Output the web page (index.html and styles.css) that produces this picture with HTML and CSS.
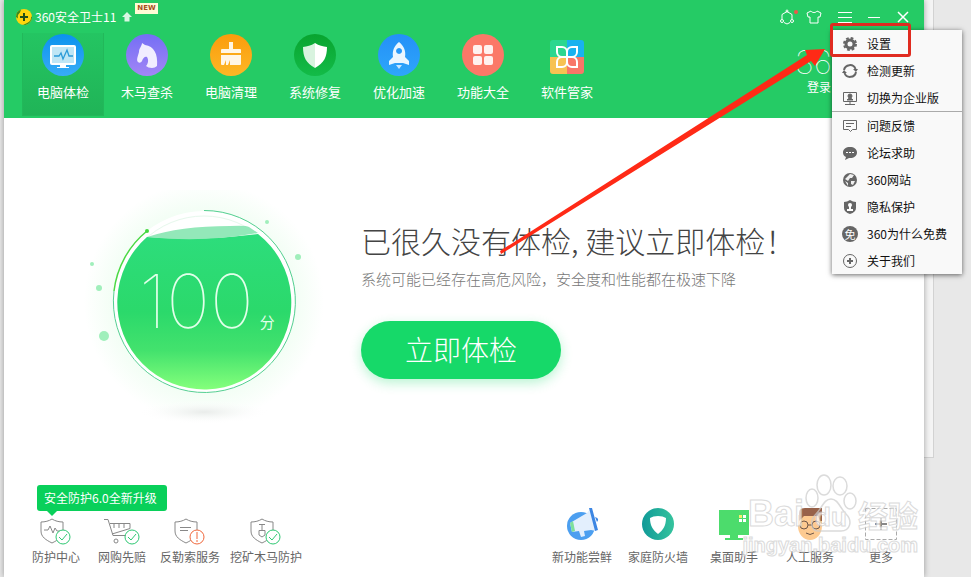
FILE: index.html
```html
<!DOCTYPE html>
<html lang="zh-CN">

<head>
  <meta charset="UTF-8" />
  <meta name="viewport" content="width=device-width, initial-scale=1.0" />
  <title>360安全卫士11</title>
  <link rel="stylesheet" href="styles.css">
</head>

<body>

  <div class="back-panel"></div>

  <div class="window">
    <header class="header">
      <div class="titlebar">
        <svg class="logo" viewBox="0 0 16 16" width="16" height="16">
          <circle cx="8" cy="8" r="8" fill="#fdd60d" />
          <path d="M0 8a8 8 0 0 1 5-7.400l-1 3a6 6 0 0 0-2 6zM16 8a8 8 0 0 1-9 8l5-2.500a6 6 0 0 0 3-6z" fill="#3c8a1c" />
          <path d="M7 4h2v3h3v2H9v3H7V9H4V7h3z" fill="#22501a" />
        </svg>
        <span class="app-name">360安全卫士11</span>
        <svg class="up" viewBox="0 0 10 10" width="10" height="10"><path d="M5 0l5 5H7.500v4.500H2.500V5H0z" fill="#d9f7e3" /></svg>
        <span class="new">NEW</span>
        <div class="controls">
          <button aria-label="消息"><svg viewBox="0 0 18 16" width="18" height="16" fill="none" stroke="#fff">
            <path d="M2 10V5.500L7 2.500l5 3V10M4 13.500l3 1.500 3-1.500" /><circle cx="7" cy="2" r="1" /><circle cx="2" cy="12" r="1.500" /><circle cx="12" cy="12" r="1.500" /><circle cx="16" cy="3" r="2" fill="#f0564a" stroke="none" /></svg></button>
          <button aria-label="换肤"><svg viewBox="0 0 16 14" width="16" height="14" fill="none" stroke="#fff">
            <path d="M5 1c1 2 5 2 6 0l4 2-1 4h-2v6H4V7H2L1 3z" /></svg></button>
          <button aria-label="菜单"><svg viewBox="0 0 14 12" width="14" height="12" stroke="#fff"><path d="M0 1.500h14M0 6.500h14M0 11.500h14" /></svg></button>
          <button aria-label="最小化"><svg viewBox="0 0 12 12" width="12" height="12" stroke="#fff"><path d="M0 6.500h12" /></svg></button>
          <button aria-label="关闭"><svg viewBox="0 0 12 12" width="12" height="12" stroke="#fff" stroke-width="1.500"><path d="M1 1l10 10M11 1L1 11" /></svg></button>
        </div>
      </div>

      <div class="toolbar">
        <nav class="tabs">
          <a class="tab active" href="#">
            <svg viewBox="0 0 42 42" width="42" height="42">
              <circle cx="21" cy="21" r="21" fill="url(#blue)" />
              <rect x="8" y="11" width="26" height="20" rx="2" fill="#fff" />
              <rect x="10" y="13" width="22" height="16" fill="#bfe6f5" />
              <path d="M18 31h6v2h3v1H15v-1h3z" fill="#fff" />
              <path d="M12 22h5l2-3 2 6 4-9 2 6h4" fill="none" stroke="#2b9bd8" stroke-width="1.300" />
            </svg>
            电脑体检
          </a>
          <a class="tab" href="#">
            <svg viewBox="0 0 42 42" width="42" height="42">
              <circle cx="21" cy="21" r="21" fill="url(#purple)" />
              <path d="M16 9l3 2c9 1 13 9 12 21q-2 2-5 2-4 0-6-2c2-2 3-6 1-9-2-1-4 1-5 4-1 2-3 2-4 1-2-2 0-6 1-10 0-4 3-6 3-9z" fill="#f1edff" />
            </svg>
            木马查杀
          </a>
          <a class="tab" href="#">
            <svg viewBox="0 0 42 42" width="42" height="42">
              <circle cx="21" cy="21" r="21" fill="url(#orange)" />
              <path d="M19 8h4v7h7q1 0 1 1v3H11v-3q0-1 1-1h7zM11 21h20v9q0 1-1 1H20v-5l-2 5h-2v-5l-2 5h-2q-1 0-1-1z" fill="#fff6e6" />
            </svg>
            电脑清理
          </a>
          <a class="tab" href="#">
            <svg viewBox="0 0 42 42" width="42" height="42">
              <circle cx="21" cy="21" r="21" fill="url(#green)" />
              <path d="M21 9c-4 3-8 3-12 4 0 10 3 16 12 21z" fill="#d8f3df" />
              <path d="M21 9c4 3 8 3 12 4 0 10-3 16-12 21z" fill="#fff" />
            </svg>
            系统修复
          </a>
          <a class="tab" href="#">
            <svg viewBox="0 0 42 42" width="42" height="42">
              <circle cx="21" cy="21" r="21" fill="url(#azure)" />
              <path fill-rule="evenodd" d="M21 8c5 4 7 9 6 15l4 4v4l-6-2h-8l-6 2v-4l4-4c-1-6 1-11 6-15zm0 6a3 3 0 1 0 .1 0z" fill="#eaf6ff" />
              <path d="M18 31h6l-3 4z" fill="#c9e8ff" />
            </svg>
            优化加速
          </a>
          <a class="tab" href="#">
            <svg viewBox="0 0 42 42" width="42" height="42">
              <circle cx="21" cy="21" r="21" fill="#fb7868" />
              <g fill="#fff0ee"><rect x="11" y="11" width="9" height="9" rx="2" /><rect x="22" y="11" width="9" height="9" rx="2" /><rect x="11" y="22" width="9" height="9" rx="2" /><rect x="22" y="22" width="9" height="9" rx="2" /></g>
            </svg>
            功能大全
          </a>
          <a class="tab" href="#">
            <svg viewBox="0 0 42 42" width="42" height="42">
              <path d="M21 6H7q-3 0-3 3v14h17z" fill="#2cd78f" />
              <path d="M21 6h14q3 0 3 3v14H21z" fill="#19b2ef" />
              <path d="M4 23h17v17H7q-3 0-3-3z" fill="#f7c252" />
              <path d="M21 23h17v14q0 3-3 3H21z" fill="#f87668" />
              <path d="M11 13h5a5 5 0 0 1 5 5v5h-5a5 5 0 0 1-5-5zM31 13h-5a5 5 0 0 0-5 5v5h5a5 5 0 0 0 5-5zM11 33h5a5 5 0 0 0 5-5v-5h-5a5 5 0 0 0-5 5zM31 33h-5a5 5 0 0 1-5-5v-5h5a5 5 0 0 1 5 5z" fill="none" stroke="#fff" stroke-width="2" />
            </svg>
            软件管家
          </a>
        </nav>
        <div class="account">
          <span class="account-logo">360</span>
          <a href="#">登录</a>
        </div>
      </div>
    </header>

    <main class="main">
      <div class="score">
        <svg viewBox="0 0 260 240" width="260" height="240">
          <circle cx="134" cy="112" r="120" fill="url(#halo)" />
          <ellipse cx="134" cy="222" rx="66" ry="12" fill="url(#shade)" />
          <circle cx="134" cy="112" r="91" fill="#fff" />
          <circle cx="134" cy="112" r="86" fill="#fff" stroke="#e6f8ec" />
          <path d="M77 47Q134 51 188 44A87 87 0 1 1 77 47z" fill="url(#liquid)" />
          <path d="M77 47Q110 36 160 36Q176 35 179 37L188 43Q134 53 77 47z" fill="#93e8b9" />
          <path d="M134 20.500A91 91 0 1 1 44 101" fill="none" stroke="#54cf91" />
          <path d="M44 101A91 91 0 0 1 77 41" fill="none" stroke="#4bd944" stroke-width="1.500" />
          <circle cx="77" cy="41" r="2" fill="#43d73f" />
          <g fill="#a0efbb"><circle cx="197" cy="32" r="2" /><circle cx="228" cy="67" r="3" /><circle cx="22" cy="74" r="2" /><circle cx="29" cy="98" r="3" /><circle cx="34" cy="146" r="5" /></g>
        </svg>
        <div class="score-text"><span class="number">100</span><span class="unit">分</span></div>
      </div>
      <div class="advice">
        <h1>已很久没有体检, 建议立即体检！</h1>
        <p>系统可能已经存在高危风险，安全度和性能都在极速下降</p>
        <button class="check">立即体检</button>
      </div>
    </main>

    <footer class="footer">
      <div class="tip">安全防护6.0全新升级</div>
      <div class="guards">
        <a class="item" href="#">
          <svg viewBox="0 0 32 28" width="32" height="28" fill="none" stroke="#888">
            <path d="M12 1c-3 2-7 3-11 3v9c0 6 5 9 11 12 6-3 11-6 11-12V4c-4 0-8-1-11-3zM4 12h4l2-4 3 7 2-5 2 3h4" />
            <circle cx="23" cy="19" r="7" fill="#fff" stroke="#2fc873" /><path d="M19 19l3 3 5-6" stroke="#2fc873" />
          </svg>
          防护中心
        </a>
        <a class="item" href="#">
          <svg viewBox="0 0 36 28" width="36" height="28" fill="none" stroke="#888">
            <path d="M0 1.500h4l5 16h17M6 5.500h20v5L8 16M10 5v5M15 5v5M20 5v5" /><circle cx="12" cy="23" r="2" />
            <circle cx="28" cy="19" r="7" fill="#fff" stroke="#2fc873" /><path d="M24 19l3 3 5-6" stroke="#2fc873" />
          </svg>
          网购先赔
        </a>
        <a class="item" href="#">
          <svg viewBox="0 0 32 28" width="32" height="28" fill="none" stroke="#888">
            <path d="M12 1c-3 2-7 3-11 3v9c0 6 5 9 11 12 6-3 11-6 11-12V4c-4 0-8-1-11-3zM6 9.500h11M6 12.500h8" />
            <circle cx="23" cy="19" r="7" fill="#fff" stroke="#f0683c" /><path d="M23 14v7M23 22v2" stroke="#f0683c" />
          </svg>
          反勒索服务
        </a>
        <a class="item" href="#">
          <svg viewBox="0 0 32 28" width="32" height="28" fill="none" stroke="#888">
            <path d="M12 1c-3 2-7 3-11 3v9c0 6 5 9 11 12 6-3 11-6 11-12V4c-4 0-8-1-11-3zM9 6.500h6M12 6v7M9 12.500h6V17l-3 2-3-2z" />
            <circle cx="23" cy="19" r="7" fill="#fff" stroke="#2fc873" /><path d="M19 19l3 3 5-6" stroke="#2fc873" />
          </svg>
          挖矿木马防护
        </a>
      </div>
      <div class="apps">
        <a class="item" href="#">
          <svg viewBox="0 0 34 34" width="34" height="34">
            <circle cx="16" cy="19" r="14" fill="#4c9ff0" />
            <path d="M5 16L22 6l3-4 6 22-5-1-7 1 1 5-4 1-2-6-7 1z" fill="#e3effd" />
            <path d="M5 16l3-2 2 10-3 1z" fill="#7ee09c" />
            <path d="M24 1h3l6 22-3 1zM30 10q5 1 2 5z" fill="#3c86e3" />
          </svg>
          新功能尝鲜
        </a>
        <a class="item" href="#">
          <svg viewBox="0 0 34 34" width="34" height="34">
            <circle cx="17" cy="17" r="16" fill="url(#teal)" />
            <path d="M17 9q5 0 8 2c0 8-3 12-8 16-5-4-8-8-8-16q3-2 8-2z" fill="#fff" />
          </svg>
          家庭防火墙
        </a>
        <a class="item" href="#">
          <svg viewBox="0 0 34 34" width="34" height="34">
            <path d="M2 3h30v25H21v3h5v2H8v-2h5v-3H2z" fill="#4cdc6c" />
            <path d="M22 8h3v3h-3z" fill="#f5f06a" /><path d="M26 8h3v3h-3zM22 12h3v3h-3zM26 12h3v3h-3z" fill="#fff" />
          </svg>
          桌面助手
        </a>
        <a class="item" href="#">
          <svg viewBox="0 0 34 34" width="34" height="34">
            <path d="M5 8h24v11a12 14 0 0 1-24 0z" fill="#fdca90" /><path d="M6 14V6q0-5 6-5h17v13h-2l-2-5H11z" fill="#98624a" />
            <g fill="none" stroke="#6d5648"><circle cx="11" cy="18" r="4" /><circle cx="23" cy="18" r="4" /><path d="M15 18h4M13 26q4 3 8 0" /></g>
          </svg>
          人工服务
        </a>
        <a class="item" href="#">
          <svg viewBox="0 0 34 34" width="34" height="34" fill="none" stroke="#aaa">
            <rect x="1.500" y="1.500" width="31" height="31" stroke-dasharray="4 2" /><path d="M17 11v12M11 17h12" stroke="#888" stroke-width="2" />
          </svg>
          更多
        </a>
      </div>
    </footer>
  </div>

  <div class="menu">
    <button><svg viewBox="0 0 16 16" width="16" height="16"><circle cx="8" cy="8" r="4" fill="none" stroke="#666" stroke-width="3" /><circle cx="8" cy="8" r="6" fill="none" stroke="#666" stroke-width="2" stroke-dasharray="2.700 2.010" /></svg>设置</button>
    <button><svg viewBox="0 0 16 16" width="16" height="16" fill="none" stroke="#666" stroke-width="2"><path d="M2 7a6 6 0 0 1 11.500-1M14 9a6 6 0 0 1-11.500 1" /><path d="M11 6h5l-2 3zM0 10h5L2 7z" fill="#666" stroke="none" /></svg>检测更新</button>
    <button><svg viewBox="0 0 16 16" width="16" height="16" fill="none" stroke="#666"><path d="M1.500 2.500h13v9h-13zM8 12v2M3 14.500h10" /><circle cx="8" cy="6" r="2" fill="#666" /><path d="M5 10q3-4 6 0z" fill="#666" /></svg>切换为企业版</button>
    <hr>
    <button><svg viewBox="0 0 16 16" width="16" height="16" fill="none" stroke="#666"><path d="M1.500 2.500h13v9h-4l-2 2-2-2h-5zM4 5.500h8M4 8.500h5" /></svg>问题反馈</button>
    <button><svg viewBox="0 0 16 16" width="16" height="16"><path d="M8 2c4 0 7 2 7 5.500S12 13 8 13H7l-4 2 1-3c-2-1-3-2.500-3-4.500C1 4 4 2 8 2z" fill="#666" /><path d="M4 7h2v1H4zM7 7h2v1H7zM10 7h2v1h-2z" fill="#fff" /></svg>论坛求助</button>
    <button><svg viewBox="0 0 16 16" width="16" height="16"><circle cx="8" cy="8" r="7" fill="#666" /><path d="M8 2l4 1-2 3H8l-2 3-3-2zM9 9h4l-2 4-2-1zM3 9l3 2v3z" fill="#f0f0f0" /></svg>360网站</button>
    <button><svg viewBox="0 0 16 16" width="16" height="16"><path d="M8 1q3 2 6 2v6q0 4-6 6-6-2-6-6V3q3 0 6-2z" fill="#666" /><circle cx="8" cy="6" r="2" fill="#fff" /><path d="M7 7h2v3h2v2H5v-2h2z" fill="#fff" /></svg>隐私保护</button>
    <button><span class="free">免</span>360为什么免费</button>
    <button><svg viewBox="0 0 16 16" width="16" height="16" fill="none" stroke="#666"><circle cx="8" cy="8" r="6.500" /><path d="M8 5v6M5 8h6" stroke-width="2" /></svg>关于我们</button>
  </div>

  <div class="highlight"></div>
  <svg class="arrow" viewBox="0 0 330 210" width="330" height="210"><path d="M1 203L308 7 306 2 326 1 316 18 312 13 2 206z" fill="#ff2a16" /></svg>

  <div class="watermark">
    <div class="mark-name">
      <span>Bai</span>
      <div class="paw">
        <svg viewBox="0 0 54 60" width="54" height="60" fill="#fff" stroke="#ccc" stroke-width="1.500"><ellipse cx="20" cy="11" rx="7" ry="10" /><ellipse cx="36" cy="12" rx="7" ry="9" /><ellipse cx="8" cy="24" rx="6" ry="9" /><ellipse cx="46" cy="27" rx="6" ry="8" /><path fill="none" d="M27 25c7 0 9 9 15 15 7 7 4 17-5 17H16C7 58 5 47 12 40c6-6 8-15 15-15z" /></svg>
        <span class="du">du</span>
      </div>
      <span class="mark-cn">经验</span>
    </div>
    <div class="mark-url">jingyan.baidu.com</div>
  </div>

  <svg class="defs" width="0" height="0">
    <defs>
      <linearGradient id="blue" x2="0" y2="1"><stop stop-color="#0b92ee" /><stop offset="1" stop-color="#38acf6" /></linearGradient>
      <linearGradient id="purple" x2="0" y2="1"><stop stop-color="#746ef5" /><stop offset="1" stop-color="#a286f5" /></linearGradient>
      <linearGradient id="orange" x2="0" y2="1"><stop stop-color="#fb9c0c" /><stop offset="1" stop-color="#fdb726" /></linearGradient>
      <linearGradient id="green" x2="0" y2="1"><stop stop-color="#08a42f" /><stop offset="1" stop-color="#13bb48" /></linearGradient>
      <linearGradient id="azure" x2="0" y2="1"><stop stop-color="#2490f8" /><stop offset="1" stop-color="#2ea6fa" /></linearGradient>
      <linearGradient id="teal"><stop stop-color="#109a98" /><stop offset="1" stop-color="#35c39d" /></linearGradient>
      <linearGradient id="liquid" x2="0" y2="1"><stop stop-color="#2ddd7c" /><stop offset=".5" stop-color="#2bd96b" /><stop offset=".75" stop-color="#43e26d" /><stop offset="1" stop-color="#84ff7b" /></linearGradient>
      <radialGradient id="halo"><stop offset=".76" stop-color="#f3fef5" /><stop offset="1" stop-color="#fff" /></radialGradient>
      <radialGradient id="shade"><stop stop-color="#e9ecea" /><stop offset="1" stop-color="#fff" stop-opacity="0" /></radialGradient>
    </defs>
  </svg>

</body>

</html>
```
FILE: styles.css
```css
* {
  box-sizing: border-box;
}

body {
  margin: 0;
  min-height: 100vh;
  padding: 0 47px 0 4px;
  display: flex;
  background: #e8e8e8;
  font-family: "Noto Sans CJK SC", sans-serif;
  font-size: 12px;
  line-height: 18px;
  position: relative;
  overflow: hidden;
}

a {
  color: inherit;
  text-decoration: none;
}

button {
  border: 0;
  padding: 0;
  background: none;
  font: inherit;
  color: inherit;
}

svg {
  display: block;
  flex: none;
}

.back-panel {
  position: absolute;
  top: 0;
  right: 37px;
  width: 20px;
  height: 458px;
  background: #f4f4f4;
  border: 1px solid #d2d2d2;
  border-top: 0;
}

.window {
  position: relative;
  flex: 1;
  display: flex;
  flex-direction: column;
  background: #fff;
  box-shadow: 0 0 6px rgba(0, 0, 0, 0.35);
}

/* Cabecera */
.header {
  height: 118px;
  background: #25cb65;
  color: #fff;
}

.titlebar {
  display: flex;
  align-items: center;
  height: 33px;
  padding: 0 14px 0 12px;
}

.app-name {
  margin: 0 6px 0 3px;
}

.new {
  align-self: flex-start;
  margin: 3px 0 0 3px;
  padding: 0 2px;
  background: #fffbd5;
  color: #a5501c;
  font: bold 7px/11px "DejaVu Sans", sans-serif;
}

.controls {
  margin-left: auto;
  display: flex;
  align-items: center;
  gap: 16px;
}

.controls button {
  min-width: 13px;
}

.controls button:first-child {
  margin-right: -8px;
}

.toolbar {
  display: flex;
  justify-content: space-between;
  padding: 0 57px 0 18px;
}

.tabs {
  display: flex;
  gap: 2px;
}

.tab {
  display: flex;
  flex-direction: column;
  align-items: center;
  gap: 7px;
  width: 82px;
  height: 83px;
  padding-top: 1px;
  font-size: 13px;
}

.tab.active {
  background: linear-gradient(#24c562, #20b457);
  border: 1px solid #22b85a;
  border-top: 0;
}

.account {
  width: 72px;
  display: flex;
  flex-direction: column;
  margin-top: 14px;
  line-height: 16px;
}

.account-logo {
  font: 100 32px/32px Inter, sans-serif;
}

.account a {
  padding-left: 12px;
}

/* Contenido */
.main {
  flex: 1;
  display: flex;
  align-items: flex-start;
  padding: 72px 0 0 66px;
}

.score {
  position: relative;
}

.score-text {
  position: absolute;
  top: 69px;
  left: 69px;
  display: flex;
  align-items: baseline;
  gap: 6px;
  color: #e2ffea;
}

.number {
  font: 100 74px/84px Inter, sans-serif;
}

.unit {
  font-size: 15px;
}

.advice {
  margin: 26px 0 0 31px;
}

.advice h1 {
  margin: 0;
  font-size: 30px;
  font-weight: 300;
  line-height: 48px;
  color: #444;
}

.advice p {
  margin: 4px 0 31px;
  font-size: 15px;
  font-weight: 300;
  line-height: 22px;
  color: #777;
}

.check {
  width: 200px;
  height: 58px;
  padding-bottom: 2px;
  border-radius: 29px;
  background: #16d969;
  box-shadow: 0 4px 12px rgba(22, 217, 105, 0.3);
  color: #fff;
  font-size: 28px;
  font-weight: 300;
}

/* Pie */
.footer {
  position: relative;
  display: flex;
  justify-content: space-between;
  align-items: flex-end;
  padding: 0 10px 11px 19px;
  color: #666;
}

.guards,
.apps {
  display: flex;
}

.item {
  display: flex;
  flex-direction: column;
  align-items: center;
}

.guards .item {
  gap: 2px;
  min-width: 66px;
  padding: 0 5px;
}

.apps .item {
  gap: 7px;
  width: 76px;
}

.apps .item:last-child {
  width: 66px;
}

.tip {
  position: absolute;
  left: 33px;
  bottom: 66px;
  padding: 4px 10px 4px 7px;
  border-radius: 3px;
  background: #09d05a;
  color: #fff;
}

.tip::after {
  content: "";
  position: absolute;
  left: 10px;
  top: 100%;
  border: 5px solid transparent;
  border-top-color: #09d05a;
}

/* Menu desplegable */
.menu {
  position: absolute;
  top: 30px;
  right: 9px;
  width: 130px;
  display: flex;
  flex-direction: column;
  background: #f9f9f9;
  box-shadow: 0 1px 5px rgba(0, 0, 0, 0.6);
  color: #111;
}

.menu button {
  display: flex;
  align-items: center;
  gap: 9px;
  height: 27px;
  padding-left: 10px;
}

.menu hr {
  width: 100%;
  margin: 0;
  border: 0;
  border-top: 1px solid #aaa;
}

.free {
  width: 16px;
  height: 16px;
  border-radius: 8px;
  background: #666;
  color: #fff;
  font-size: 11px;
  line-height: 16px;
}

.highlight {
  position: absolute;
  top: 23px;
  right: 60px;
  width: 81px;
  height: 34px;
  border: 3px solid #e02b20;
  border-radius: 3px;
}

.arrow {
  position: absolute;
  top: 48px;
  right: 142px;
}

/* Marca de agua */
.watermark {
  position: absolute;
  right: 53px;
  bottom: 21px;
  color: #fff;
  opacity: 0.7;
  -webkit-text-stroke: 1px #ccc;
  pointer-events: none;
}

.mark-name {
  display: flex;
  align-items: flex-end;
  justify-content: flex-end;
  font: bold 36px/40px "Liberation Sans", sans-serif;
}

.paw {
  position: relative;
}

.du {
  position: absolute;
  left: 11px;
  bottom: 3px;
  font-size: 26px;
  line-height: 28px;
}

.mark-cn {
  font-family: "Noto Sans CJK SC", sans-serif;
  font-size: 30px;
}

.mark-url {
  font: bold 20px/22px "Liberation Sans", sans-serif;
}

.defs {
  position: absolute;
}
```
